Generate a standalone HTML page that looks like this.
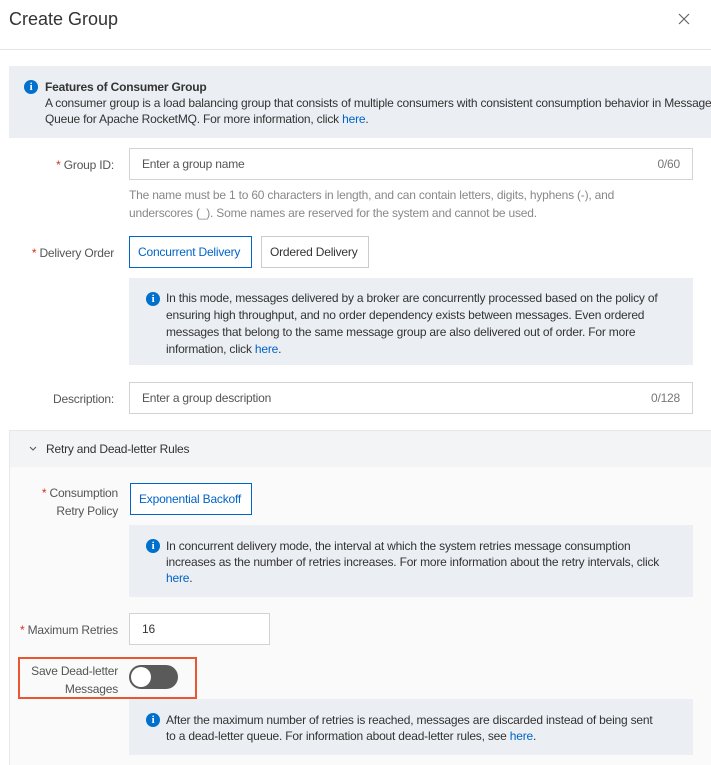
<!DOCTYPE html>
<html><head><meta charset="utf-8"><style>
*{box-sizing:border-box;margin:0;padding:0}
body{width:711px;height:765px;overflow:hidden;background:#fff;font-family:"Liberation Sans",sans-serif;font-size:12px;color:#333;position:relative;letter-spacing:-0.2px}
.a{position:absolute}
.info{position:absolute;background:#ebeef3}
.ic{position:absolute;width:14px;height:14px;border-radius:50%;background:#0070cc;color:#fff;font-weight:bold;font-size:11px;line-height:14px;text-align:center;font-family:"Liberation Serif",serif}
a{color:#0064c8;text-decoration:none}
.inp{position:absolute;border:1px solid #d3d3d3;background:#fff;height:32px;line-height:30px;padding:0 12px;color:#555}
.lbl{position:absolute;text-align:right;color:#555;line-height:18px}
.st{color:#d93026}
.btn{position:absolute;height:32px;line-height:30px;padding:0 8px;border:1px solid #ccc;background:#fff;color:#333}
.sel{border-color:#0064c8;color:#0064c8}
.p{position:absolute;line-height:17px;color:#333}
</style></head><body>
<div class="a" style="left:9px;top:9px;font-size:18px;color:#333;letter-spacing:0">Create Group</div>
<svg class="a" style="left:678px;top:13px" width="12" height="12" viewBox="0 0 12 12"><path d="M1 1L11 11M11 1L1 11" stroke="#666" stroke-width="1.2"/></svg>
<div class="a" style="left:0;top:49px;width:711px;height:1px;background:#e5e5e5"></div>
<div class="info" style="left:9px;top:66px;width:702px;height:72px"></div>
<div class="ic" style="left:24px;top:80px">i</div>
<div class="p" style="left:45px;top:79px;font-weight:bold;color:#333">Features of Consumer Group</div>
<div class="p" style="left:45px;top:95px;white-space:nowrap">A consumer group is a load balancing group that consists of multiple consumers with consistent consumption behavior in Message</div>
<div class="p" style="left:45px;top:111px">Queue for Apache RocketMQ. For more information, click <a>here</a>.</div>
<div class="lbl" style="left:20px;width:94px;top:156px"><span class="st">* </span>Group ID:</div>
<div class="inp" style="left:129px;top:148px;width:564px">Enter a group name<span style="float:right;color:#777">0/60</span></div>
<div class="p" style="left:129px;top:186px;color:#888;line-height:18px;width:520px">The name must be 1 to 60 characters in length, and can contain letters, digits, hyphens (-), and underscores (_). Some names are reserved for the system and cannot be used.</div>
<div class="lbl" style="left:10px;width:104px;top:244px"><span class="st">* </span>Delivery Order</div>
<div class="btn sel" style="left:129px;top:236px;width:123px">Concurrent Delivery</div>
<div class="btn" style="left:261px;top:236px;width:108px">Ordered Delivery</div>
<div class="info" style="left:129px;top:278px;width:564px;height:87px"></div>
<div class="ic" style="left:146px;top:292px">i</div>
<div class="p" style="left:166px;top:290px;width:500px">In this mode, messages delivered by a broker are concurrently processed based on the policy of ensuring high throughput, and no order dependency exists between messages. Even ordered messages that belong to the same message group are also delivered out of order. For more information, click <a>here</a>.</div>
<div class="lbl" style="left:10px;width:104px;top:390px">Description:</div>
<div class="inp" style="left:129px;top:382px;width:564px">Enter a group description<span style="float:right;color:#777">0/128</span></div>
<div class="a" style="left:9px;top:430px;width:702px;height:335px;background:#fafafa;border:1px solid #e8e8e8;border-right:none;border-bottom:none"></div>
<div class="a" style="left:10px;top:431px;width:701px;height:36px;background:#f3f4f6"></div>
<svg class="a" style="left:29px;top:446px" width="8" height="6" viewBox="0 0 8 6"><path d="M1 1L4 4L7 1" stroke="#555" fill="none" stroke-width="1"/></svg>
<div class="p" style="left:46px;top:441px">Retry and Dead-letter Rules</div>
<div class="lbl" style="left:10px;width:108px;top:484px"><span class="st">* </span>Consumption<br>Retry Policy</div>
<div class="btn sel" style="left:130px;top:483px;width:122px">Exponential Backoff</div>
<div class="info" style="left:129px;top:525px;width:564px;height:72px"></div>
<div class="ic" style="left:146px;top:539px">i</div>
<div class="p" style="left:166px;top:538px;width:500px;line-height:16px">In concurrent delivery mode, the interval at which the system retries message consumption<br>increases as the number of retries increases. For more information about the retry intervals, click<br><a>here</a>.</div>
<div class="lbl" style="left:10px;width:108px;top:621px"><span class="st">* </span>Maximum Retries</div>
<div class="inp" style="left:129px;top:613px;width:141px;color:#333">16</div>
<div class="a" style="left:18px;top:657px;width:179px;height:42px;border:2px solid #ea5532"></div>
<div class="lbl" style="left:20px;width:98px;top:662px">Save Dead-letter<br>Messages</div>
<div class="a" style="left:129px;top:665px;width:49px;height:24px;border-radius:12px;background:#5a5a5a"></div>
<div class="a" style="left:131px;top:667px;width:20px;height:20px;border-radius:50%;background:#fff"></div>
<div class="info" style="left:129px;top:699px;width:564px;height:56px"></div>
<div class="ic" style="left:146px;top:713px">i</div>
<div class="p" style="left:166px;top:712px;width:520px;line-height:16px">After the maximum number of retries is reached, messages are discarded instead of being sent<br>to a dead-letter queue. For information about dead-letter rules, see <a>here</a>.</div>
</body></html>
